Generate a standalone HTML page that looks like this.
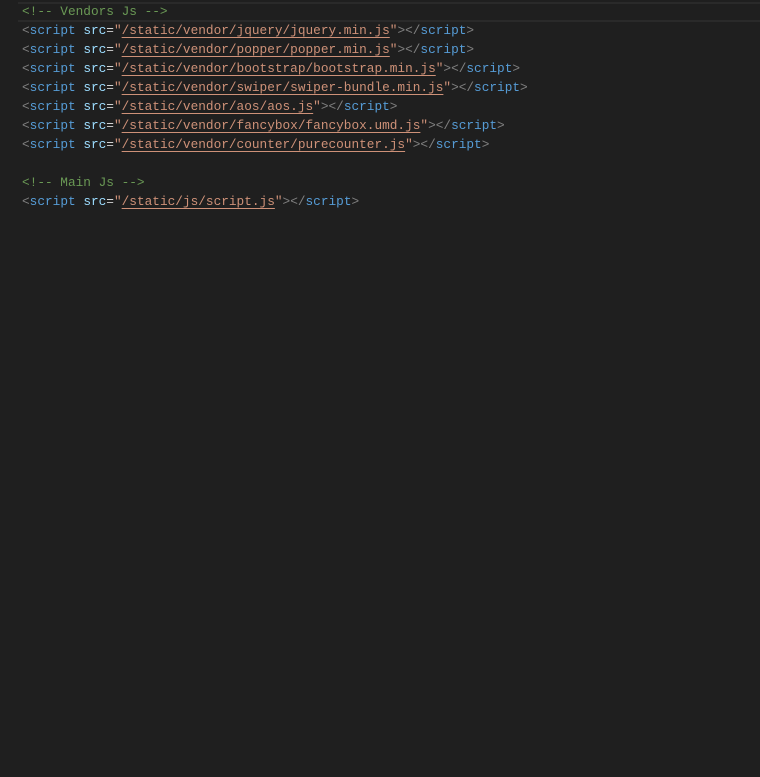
<!DOCTYPE html><html><head><style>
body{margin:0;background:#1f1f1f;width:760px;height:777px;overflow:hidden}
.hl{position:absolute;left:18px;right:0;top:2px;height:16px;border-top:2px solid #2a2a2a;border-bottom:2px solid #2a2a2a}
pre{position:absolute;left:22px;top:2px;margin:0;font:12.78px/19px "Liberation Mono",monospace;color:#d4d4d4}
.c{color:#6a9955}.p{color:#808080}.t{color:#569cd6}.a{color:#9cdcfe}.s{color:#ce9178}
.u{color:#ce9178;text-decoration:underline;text-underline-offset:3px}
</style></head><body><div class="hl"></div><pre><span class="c">&lt;!-- Vendors Js --&gt;</span>
<span class="p">&lt;</span><span class="t">script</span> <span class="a">src</span>=<span class="s">"</span><span class="u">/static/vendor/jquery/jquery.min.js</span><span class="s">"</span><span class="p">&gt;&lt;/</span><span class="t">script</span><span class="p">&gt;</span>
<span class="p">&lt;</span><span class="t">script</span> <span class="a">src</span>=<span class="s">"</span><span class="u">/static/vendor/popper/popper.min.js</span><span class="s">"</span><span class="p">&gt;&lt;/</span><span class="t">script</span><span class="p">&gt;</span>
<span class="p">&lt;</span><span class="t">script</span> <span class="a">src</span>=<span class="s">"</span><span class="u">/static/vendor/bootstrap/bootstrap.min.js</span><span class="s">"</span><span class="p">&gt;&lt;/</span><span class="t">script</span><span class="p">&gt;</span>
<span class="p">&lt;</span><span class="t">script</span> <span class="a">src</span>=<span class="s">"</span><span class="u">/static/vendor/swiper/swiper-bundle.min.js</span><span class="s">"</span><span class="p">&gt;&lt;/</span><span class="t">script</span><span class="p">&gt;</span>
<span class="p">&lt;</span><span class="t">script</span> <span class="a">src</span>=<span class="s">"</span><span class="u">/static/vendor/aos/aos.js</span><span class="s">"</span><span class="p">&gt;&lt;/</span><span class="t">script</span><span class="p">&gt;</span>
<span class="p">&lt;</span><span class="t">script</span> <span class="a">src</span>=<span class="s">"</span><span class="u">/static/vendor/fancybox/fancybox.umd.js</span><span class="s">"</span><span class="p">&gt;&lt;/</span><span class="t">script</span><span class="p">&gt;</span>
<span class="p">&lt;</span><span class="t">script</span> <span class="a">src</span>=<span class="s">"</span><span class="u">/static/vendor/counter/purecounter.js</span><span class="s">"</span><span class="p">&gt;&lt;/</span><span class="t">script</span><span class="p">&gt;</span>

<span class="c">&lt;!-- Main Js --&gt;</span>
<span class="p">&lt;</span><span class="t">script</span> <span class="a">src</span>=<span class="s">"</span><span class="u">/static/js/script.js</span><span class="s">"</span><span class="p">&gt;&lt;/</span><span class="t">script</span><span class="p">&gt;</span></pre></body></html>
